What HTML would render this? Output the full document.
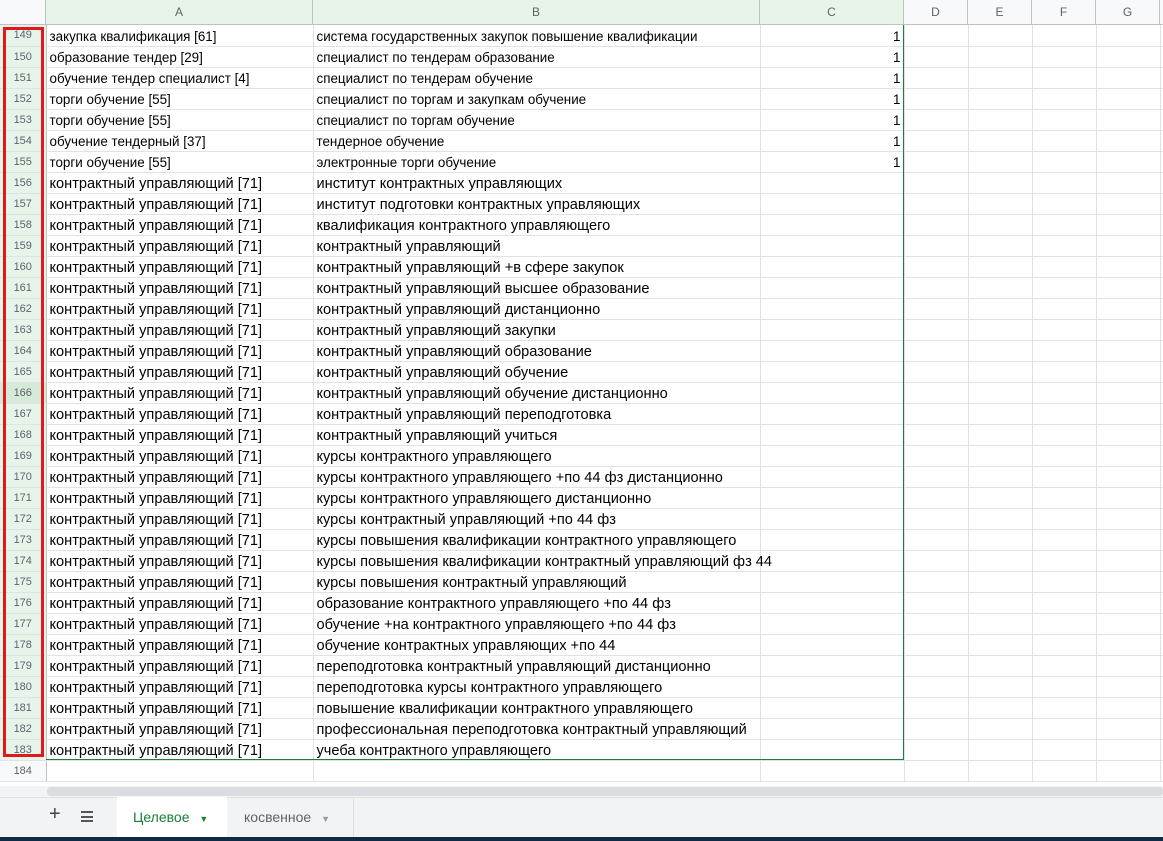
<!DOCTYPE html><html><head><meta charset="utf-8"><style>
*{margin:0;padding:0;box-sizing:border-box}
body{width:1163px;height:841px;overflow:hidden;background:#fff;font-family:"Liberation Sans",Arial,sans-serif;position:relative}
.hdr{position:absolute;top:0;height:25px;border-right:1px solid #c0c0c0;border-bottom:1px solid #c0c0c0;background:#f8f9fa;color:#5f6368;font-size:12px;text-align:center;line-height:24px}
.hg{background:#e6f4ea}
table{position:absolute;left:0;top:25px;width:1170px;border-collapse:collapse;table-layout:fixed}
td{height:21px;border-right:1px solid #e2e2e2;border-bottom:1px solid #e2e2e2;white-space:nowrap;overflow:visible;padding:0 3px;font-size:13.4px;color:#000;line-height:18px;vertical-align:bottom}
td.rh{background:#f8f9fa;color:#5f6368;font-size:11px;text-align:center;border-right:1px solid #c0c0c0;padding:0;line-height:20px;vertical-align:middle}
td.rs{background:#e6f4ea}
td.n{text-align:right;padding-right:3px}
tr.b td.t{font-size:14.6px}
</style></head><body>
<div class="hdr" style="left:0;width:46px"></div>
<div class="hdr hg" style="left:46px;width:267px">A</div>
<div class="hdr hg" style="left:313px;width:447px">B</div>
<div class="hdr hg" style="left:760px;width:144px">C</div>
<div class="hdr" style="left:904px;width:64px">D</div>
<div class="hdr" style="left:968px;width:64px">E</div>
<div class="hdr" style="left:1032px;width:64px">F</div>
<div class="hdr" style="left:1096px;width:64px">G</div>
<div class="hdr" style="left:1160px;width:10px"></div>
<table>
<colgroup><col style="width:46px"><col style="width:267px"><col style="width:447px"><col style="width:144px"><col style="width:64px"><col style="width:64px"><col style="width:64px"><col style="width:64px"><col style="width:10px"></colgroup>
<tr><td class="rh rs">149</td><td class="t">закупка квалификация [61]</td><td class="t">система государственных закупок повышение квалификации</td><td class="n">1</td><td></td><td></td><td></td><td></td><td></td></tr>
<tr><td class="rh rs">150</td><td class="t">образование тендер [29]</td><td class="t">специалист по тендерам образование</td><td class="n">1</td><td></td><td></td><td></td><td></td><td></td></tr>
<tr><td class="rh rs">151</td><td class="t">обучение тендер специалист [4]</td><td class="t">специалист по тендерам обучение</td><td class="n">1</td><td></td><td></td><td></td><td></td><td></td></tr>
<tr><td class="rh rs">152</td><td class="t">торги обучение [55]</td><td class="t">специалист по торгам и закупкам обучение</td><td class="n">1</td><td></td><td></td><td></td><td></td><td></td></tr>
<tr><td class="rh rs">153</td><td class="t">торги обучение [55]</td><td class="t">специалист по торгам обучение</td><td class="n">1</td><td></td><td></td><td></td><td></td><td></td></tr>
<tr><td class="rh rs">154</td><td class="t">обучение тендерный [37]</td><td class="t">тендерное обучение</td><td class="n">1</td><td></td><td></td><td></td><td></td><td></td></tr>
<tr><td class="rh rs">155</td><td class="t">торги обучение [55]</td><td class="t">электронные торги обучение</td><td class="n">1</td><td></td><td></td><td></td><td></td><td></td></tr>
<tr class="b"><td class="rh rs">156</td><td class="t">контрактный управляющий [71]</td><td class="t">институт контрактных управляющих</td><td></td><td></td><td></td><td></td><td></td><td></td></tr>
<tr class="b"><td class="rh rs">157</td><td class="t">контрактный управляющий [71]</td><td class="t">институт подготовки контрактных управляющих</td><td></td><td></td><td></td><td></td><td></td><td></td></tr>
<tr class="b"><td class="rh rs">158</td><td class="t">контрактный управляющий [71]</td><td class="t">квалификация контрактного управляющего</td><td></td><td></td><td></td><td></td><td></td><td></td></tr>
<tr class="b"><td class="rh rs">159</td><td class="t">контрактный управляющий [71]</td><td class="t">контрактный управляющий</td><td></td><td></td><td></td><td></td><td></td><td></td></tr>
<tr class="b"><td class="rh rs">160</td><td class="t">контрактный управляющий [71]</td><td class="t">контрактный управляющий +в сфере закупок</td><td></td><td></td><td></td><td></td><td></td><td></td></tr>
<tr class="b"><td class="rh rs">161</td><td class="t">контрактный управляющий [71]</td><td class="t">контрактный управляющий высшее образование</td><td></td><td></td><td></td><td></td><td></td><td></td></tr>
<tr class="b"><td class="rh rs">162</td><td class="t">контрактный управляющий [71]</td><td class="t">контрактный управляющий дистанционно</td><td></td><td></td><td></td><td></td><td></td><td></td></tr>
<tr class="b"><td class="rh rs">163</td><td class="t">контрактный управляющий [71]</td><td class="t">контрактный управляющий закупки</td><td></td><td></td><td></td><td></td><td></td><td></td></tr>
<tr class="b"><td class="rh rs">164</td><td class="t">контрактный управляющий [71]</td><td class="t">контрактный управляющий образование</td><td></td><td></td><td></td><td></td><td></td><td></td></tr>
<tr class="b"><td class="rh rs">165</td><td class="t">контрактный управляющий [71]</td><td class="t">контрактный управляющий обучение</td><td></td><td></td><td></td><td></td><td></td><td></td></tr>
<tr class="b"><td class="rh rs" style="background:#d6ead9">166</td><td class="t">контрактный управляющий [71]</td><td class="t">контрактный управляющий обучение дистанционно</td><td></td><td></td><td></td><td></td><td></td><td></td></tr>
<tr class="b"><td class="rh rs">167</td><td class="t">контрактный управляющий [71]</td><td class="t">контрактный управляющий переподготовка</td><td></td><td></td><td></td><td></td><td></td><td></td></tr>
<tr class="b"><td class="rh rs">168</td><td class="t">контрактный управляющий [71]</td><td class="t">контрактный управляющий учиться</td><td></td><td></td><td></td><td></td><td></td><td></td></tr>
<tr class="b"><td class="rh rs">169</td><td class="t">контрактный управляющий [71]</td><td class="t">курсы контрактного управляющего</td><td></td><td></td><td></td><td></td><td></td><td></td></tr>
<tr class="b"><td class="rh rs">170</td><td class="t">контрактный управляющий [71]</td><td class="t">курсы контрактного управляющего +по 44 фз дистанционно</td><td></td><td></td><td></td><td></td><td></td><td></td></tr>
<tr class="b"><td class="rh rs">171</td><td class="t">контрактный управляющий [71]</td><td class="t">курсы контрактного управляющего дистанционно</td><td></td><td></td><td></td><td></td><td></td><td></td></tr>
<tr class="b"><td class="rh rs">172</td><td class="t">контрактный управляющий [71]</td><td class="t">курсы контрактный управляющий +по 44 фз</td><td></td><td></td><td></td><td></td><td></td><td></td></tr>
<tr class="b"><td class="rh rs">173</td><td class="t">контрактный управляющий [71]</td><td class="t">курсы повышения квалификации контрактного управляющего</td><td></td><td></td><td></td><td></td><td></td><td></td></tr>
<tr class="b"><td class="rh rs">174</td><td class="t">контрактный управляющий [71]</td><td class="t">курсы повышения квалификации контрактный управляющий фз 44</td><td></td><td></td><td></td><td></td><td></td><td></td></tr>
<tr class="b"><td class="rh rs">175</td><td class="t">контрактный управляющий [71]</td><td class="t">курсы повышения контрактный управляющий</td><td></td><td></td><td></td><td></td><td></td><td></td></tr>
<tr class="b"><td class="rh rs">176</td><td class="t">контрактный управляющий [71]</td><td class="t">образование контрактного управляющего +по 44 фз</td><td></td><td></td><td></td><td></td><td></td><td></td></tr>
<tr class="b"><td class="rh rs">177</td><td class="t">контрактный управляющий [71]</td><td class="t">обучение +на контрактного управляющего +по 44 фз</td><td></td><td></td><td></td><td></td><td></td><td></td></tr>
<tr class="b"><td class="rh rs">178</td><td class="t">контрактный управляющий [71]</td><td class="t">обучение контрактных управляющих +по 44</td><td></td><td></td><td></td><td></td><td></td><td></td></tr>
<tr class="b"><td class="rh rs">179</td><td class="t">контрактный управляющий [71]</td><td class="t">переподготовка контрактный управляющий дистанционно</td><td></td><td></td><td></td><td></td><td></td><td></td></tr>
<tr class="b"><td class="rh rs">180</td><td class="t">контрактный управляющий [71]</td><td class="t">переподготовка курсы контрактного управляющего</td><td></td><td></td><td></td><td></td><td></td><td></td></tr>
<tr class="b"><td class="rh rs">181</td><td class="t">контрактный управляющий [71]</td><td class="t">повышение квалификации контрактного управляющего</td><td></td><td></td><td></td><td></td><td></td><td></td></tr>
<tr class="b"><td class="rh rs">182</td><td class="t">контрактный управляющий [71]</td><td class="t">профессиональная переподготовка контрактный управляющий</td><td></td><td></td><td></td><td></td><td></td><td></td></tr>
<tr class="b"><td class="rh rs">183</td><td class="t">контрактный управляющий [71]</td><td class="t">учеба контрактного управляющего</td><td></td><td></td><td></td><td></td><td></td><td></td></tr>
<tr><td class="rh">184</td><td></td><td></td><td></td><td></td><td></td><td></td><td></td><td></td></tr>
</table>
<div style="position:absolute;left:903px;top:25px;width:1px;height:735px;background:#1e7e34"></div>
<div style="position:absolute;left:46px;top:759px;width:858px;height:1px;background:#1e7e34"></div>
<div style="position:absolute;left:3px;top:27px;width:41px;height:730px;border:3px solid #e0191b"></div>
<div style="position:absolute;left:0;top:781px;width:1163px;height:5px;background:#fff;border-top:1px solid #e2e2e2"></div>
<div style="position:absolute;left:0;top:786px;width:1163px;height:11px;background:#f1f3f4"></div>
<div style="position:absolute;left:47px;top:787px;width:1116px;height:9px;background:#dadce0;border-radius:4px"></div>
<div style="position:absolute;left:0;top:797px;width:1163px;height:40px;background:#f1f3f4;border-top:1px solid #e0e0e0"></div>
<div style="position:absolute;left:49px;top:803px;font-size:20px;color:#444">+</div>
<div style="position:absolute;left:81px;top:811px;width:12px;height:11px;border-top:2px solid #555;border-bottom:2px solid #555"><div style="margin-top:2.5px;height:2px;background:#555"></div></div>
<div style="position:absolute;left:117px;top:797px;width:110px;height:40px;background:#fff;color:#188038;font-size:14px;line-height:40px;padding-left:16px">Целевое <span style="font-size:9px;margin-left:6px">▼</span></div>
<div style="position:absolute;left:228px;top:797px;width:126px;height:40px;border-right:1px solid #e0e0e0;color:#5f6368;font-size:14px;line-height:40px;padding-left:16px">косвенное <span style="font-size:9px;margin-left:6px;color:#999">▼</span></div>
<div style="position:absolute;left:0;top:837px;width:1163px;height:4px;background:#0f2a45"></div>
</body></html>
